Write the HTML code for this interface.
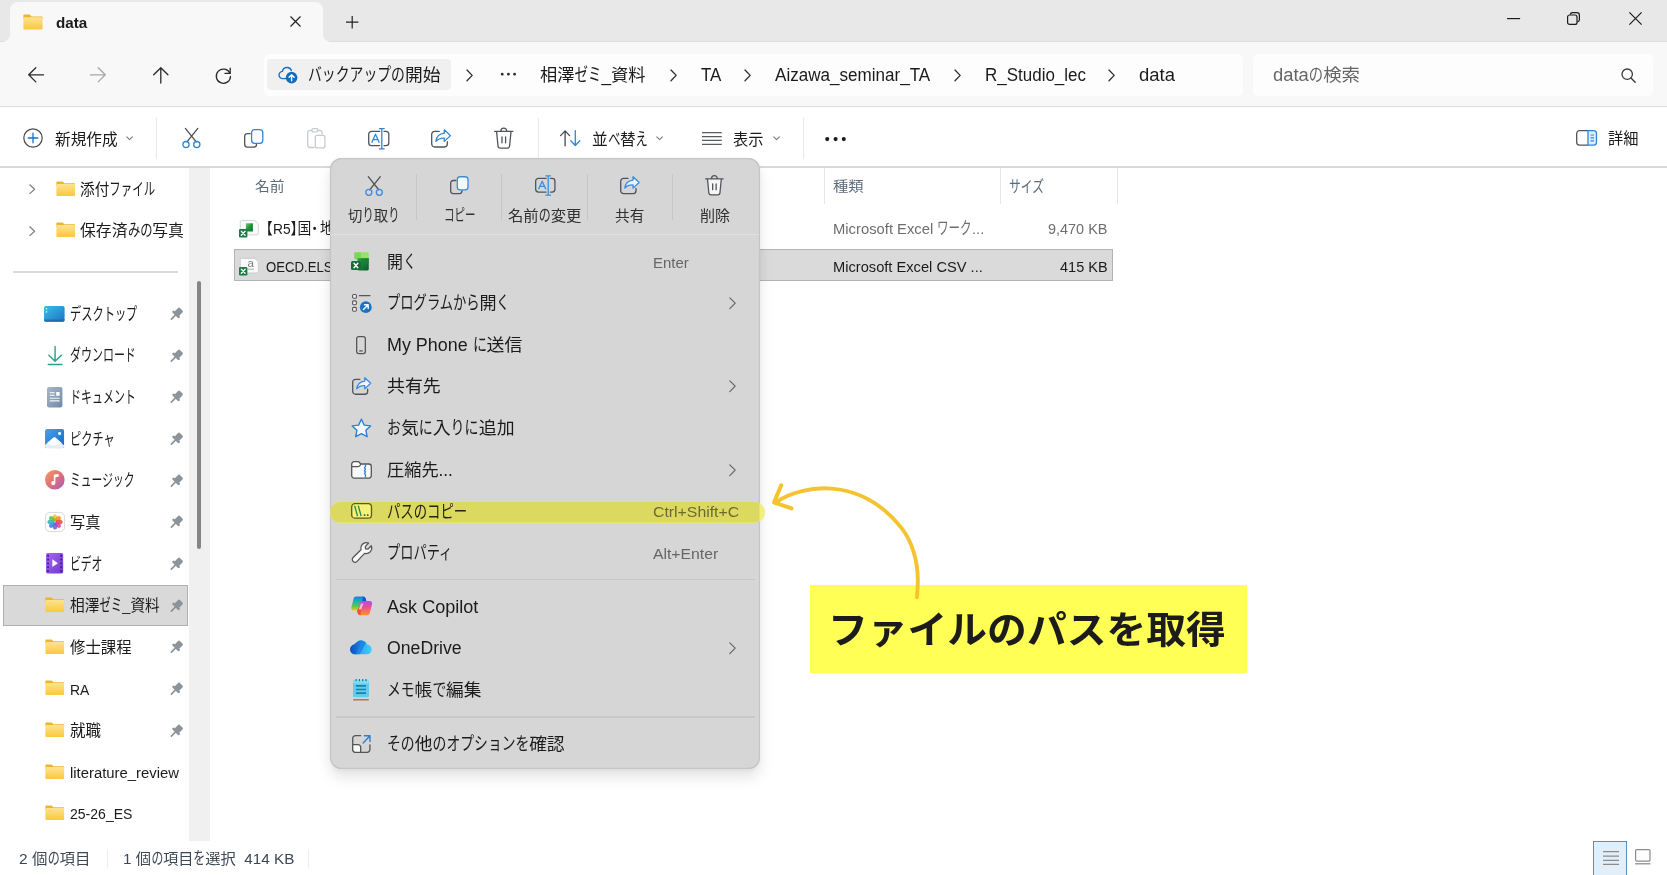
<!DOCTYPE html>
<html lang="ja">
<head>
<meta charset="utf-8">
<title>data</title>
<style>
html,body{margin:0;padding:0;}
body{width:1667px;height:875px;overflow:hidden;position:relative;background:#fff;
font-family:"Liberation Sans","Noto Sans CJK JP",sans-serif;color:#1b1b1b;}
.abs{position:absolute;}
.t{position:absolute;white-space:nowrap;line-height:1;transform-origin:0 50%;}
.k{display:inline-block;line-height:0;font-size:1.1em;transform:scaleX(.71);transform-origin:0 50%;margin-right:calc(var(--n) * -.29em);}
.k2{display:inline-block;line-height:0;font-size:1.03em;transform:scaleX(.757);transform-origin:0 50%;margin-right:calc(var(--n) * -.243em);}
.h{font-feature-settings:"halt";}
svg{position:absolute;overflow:visible;}
#titlebar{left:0;top:0;width:1667px;height:42px;background:#e8e8e8;border-bottom:1px solid #dedede;box-sizing:border-box;}
#tab{left:10px;top:2px;width:313px;height:41px;background:#f8f8f8;border-radius:8px 8px 0 0;}
#navbar{left:0;top:42px;width:1667px;height:64px;background:#f8f8f8;}
#navline{left:0;top:105.500px;width:1667px;height:1.500px;background:#dddddd;}
#addr{left:264px;top:54px;width:979px;height:42px;background:#fdfdfd;border-radius:5px;}
#chip{left:267px;top:59px;width:184px;height:31px;background:#f0f0f0;border-radius:4px;}
#search{left:1253px;top:54px;width:400px;height:42px;background:#fdfdfd;border-radius:5px;}
#toolbar{left:0;top:107px;width:1667px;height:59px;background:#fff;}
#toolline{left:0;top:166px;width:1667px;height:1.500px;background:#d9d9d9;}
.vsep{position:absolute;width:1px;background:#e8e8e8;}
#sidegap{left:188.500px;top:167.500px;width:21.500px;height:673px;background:#f0f0f0;}
#thumb{left:197px;top:281px;width:4px;height:268px;background:#858585;border-radius:2px;}
#sidesel{left:3px;top:584.500px;width:185px;height:41px;background:#d9d9d9;border:1px solid #b0b0b0;box-sizing:border-box;}
#sidediv{left:13px;top:271px;width:165px;height:1.500px;background:#dadada;}
#rowsel{left:233.500px;top:248.500px;width:879px;height:32px;background:#dadada;border:1px solid #b3b3b3;box-sizing:border-box;}
#menu{left:330px;top:157.500px;width:429.500px;height:611.500px;background:#d6d6d6;border-radius:11.500px;box-shadow:0 9px 14px rgba(0,0,0,.10),0 2px 5px rgba(0,0,0,.05),inset 0 0 0 1.200px #c5c5c5;}
.hsep{position:absolute;height:1.200px;background:#c8c8c8;}
#hlout{left:330px;top:502px;width:434.500px;height:20.500px;background:#f1ef7e;border-radius:10.250px;}
#hl{left:330px;top:502px;width:434.500px;height:20.500px;background:#dcd960;border-radius:10.250px;clip-path:inset(0 5px 0 0);}
#note{left:809.500px;top:585px;width:437px;height:88px;background:#ffff55;}
</style>
</head>
<body>
<div id="root" class="abs" style="left:0;top:0;width:1667px;height:875px;will-change:transform;">
<div id="titlebar" class="abs"></div>
<div id="tab" class="abs"></div>
<div id="navbar" class="abs"></div>
<div id="navline" class="abs"></div>
<div id="addr" class="abs"></div>
<div id="chip" class="abs"></div>
<div id="search" class="abs"></div>
<div id="toolbar" class="abs"></div>
<div id="toolline" class="abs"></div>
<!-- ===== title bar ===== -->
<svg style="left:2px;top:34px" width="8" height="8" viewBox="0 0 8 8"><path d="M8 0v8H0A8 8 0 0 0 8 0z" fill="#f8f8f8"/></svg>
<svg style="left:323px;top:34px" width="8" height="8" viewBox="0 0 8 8"><path d="M0 0v8h8A8 8 0 0 1 0 0z" fill="#f8f8f8"/></svg>
<svg width="0" height="0"><defs>
<linearGradient id="fg" x1="0" y1="0" x2="0" y2="1"><stop offset="0" stop-color="#ffe393"/><stop offset="1" stop-color="#f9c83c"/></linearGradient>
<g id="folder"><path d="M.4 1.400C.4.800.8.400 1.400.400h4.700c.5 0 .9.200 1.200.6l.9 1.200h9.900c.6 0 1 .4 1 1v1.800H.4z" fill="#eeb42a"/><rect x=".4" y="2.900" width="18.700" height="12" rx="1" fill="url(#fg)"/></g>
<path id="chv" d="M1 1l5.200 5.400L1 11.800" stroke="#2e2e2e" stroke-width="1.300" fill="none" stroke-linecap="round" stroke-linejoin="round"/>
<path id="chd" d="M.8.800l2.800 2.800L6.400.800" stroke="#7a7a7a" stroke-width="1.100" fill="none" stroke-linecap="round" stroke-linejoin="round"/>
<g id="pin"><path d="M8.200.600l4.800 4.800c.3.300.2.800-.2 1l-2.700 1.100-1.500 3.600c-.1.300-.6.400-.8.200L2.500 6c-.2-.2-.1-.7.200-.8l3.600-1.500L7.400.9c.1-.4.500-.5.800-.3z" fill="#8b9399"/><path d="M4.600 9.200L.6 13.200" stroke="#8b9399" stroke-width="1.300" stroke-linecap="round"/></g>
</defs></svg>
<svg style="left:22.500px;top:13.500px" width="20" height="16" viewBox="0 0 19.500 15.300"><use href="#folder"/></svg>
<svg style="left:289.800px;top:16px" width="11" height="11" viewBox="0 0 11 11"><path d="M.5.500l10 10M10.500.500l-10 10" stroke="#222" stroke-width="1.200" fill="none"/></svg>
<svg style="left:346.400px;top:16.200px" width="12.400" height="12.400" viewBox="0 0 12.400 12.400"><path d="M6.200 0v12.400M0 6.200h12.400" stroke="#222" stroke-width="1.200" fill="none"/></svg>
<!-- window controls -->
<svg style="left:1507px;top:17.800px" width="13.200" height="1.200" viewBox="0 0 13.200 1.200"><path d="M0 .6h13.200" stroke="#1b1b1b" stroke-width="1.200" fill="none"/></svg>
<svg style="left:1567px;top:12px" width="13" height="13" viewBox="0 0 13 13"><rect x=".6" y="3" width="9.400" height="9.400" rx="2" fill="none" stroke="#1b1b1b" stroke-width="1.200"/><path d="M3.200 2.600c.2-1.100 1.100-2 2.300-2h4.300c1.500 0 2.600 1.100 2.600 2.600v4.300c0 1.200-.9 2.100-2 2.300" fill="none" stroke="#1b1b1b" stroke-width="1.200"/></svg>
<svg style="left:1629px;top:12px" width="13" height="13" viewBox="0 0 13 13"><path d="M.4.400l12.200 12.200M12.600.400L.4 12.600" stroke="#1b1b1b" stroke-width="1.200" fill="none"/></svg>
<!-- ===== nav bar ===== -->
<svg style="left:27.500px;top:66.600px" width="16" height="15.600" viewBox="0 0 16 15.600"><path d="M15.600 7.800H1M7.800.700L.7 7.800l7.100 7.100" stroke="#2a2a2a" stroke-width="1.300" fill="none" stroke-linecap="round" stroke-linejoin="round"/></svg>
<svg style="left:90.200px;top:66.600px" width="16" height="15.600" viewBox="0 0 16 15.600"><path d="M.4 7.800H15M8.200.700l7.100 7.100-7.100 7.100" stroke="#a8a8a8" stroke-width="1.300" fill="none" stroke-linecap="round" stroke-linejoin="round"/></svg>
<svg style="left:152.800px;top:66.800px" width="15.600" height="16.400" viewBox="0 0 15.600 16.400"><path d="M7.800 16V1M.7 7.800L7.800.700l7.100 7.100" stroke="#2a2a2a" stroke-width="1.300" fill="none" stroke-linecap="round" stroke-linejoin="round"/></svg>
<svg style="left:214.600px;top:66.600px" width="17" height="17" viewBox="0 0 17 17"><path d="M14.900 6.300A7.100 7.100 0 1 0 15.500 9.400" stroke="#2a2a2a" stroke-width="1.300" fill="none" stroke-linecap="round"/><path d="M15.200 1.200v5.200H10" stroke="#2a2a2a" stroke-width="1.300" fill="none" stroke-linecap="round" stroke-linejoin="round"/></svg>
<svg style="left:277.500px;top:65.500px" width="20" height="18" viewBox="0 0 20 18"><path d="M8.600 12.600H4.900a3.600 3.600 0 0 1-.5-7.200A4.700 4.700 0 0 1 13.400 4.400" stroke="#1c6fc2" stroke-width="1.400" fill="none" stroke-linecap="round"/><circle cx="13.600" cy="11.600" r="5.800" fill="#0f6cbd"/><path d="M13.600 14.700V8.900M11.100 11.200l2.500-2.500 2.500 2.500" stroke="#fff" stroke-width="1.400" fill="none" stroke-linecap="round" stroke-linejoin="round"/></svg>
<svg style="left:466.200px;top:69.200px" width="7.200" height="12.800" viewBox="0 0 7.200 12.800"><use href="#chv"/></svg>
<svg style="left:669.500px;top:69.200px" width="7.200" height="12.800" viewBox="0 0 7.200 12.800"><use href="#chv"/></svg>
<svg style="left:744px;top:69.200px" width="7.200" height="12.800" viewBox="0 0 7.200 12.800"><use href="#chv"/></svg>
<svg style="left:953.800px;top:69.200px" width="7.200" height="12.800" viewBox="0 0 7.200 12.800"><use href="#chv"/></svg>
<svg style="left:1107.800px;top:69.200px" width="7.200" height="12.800" viewBox="0 0 7.200 12.800"><use href="#chv"/></svg>
<svg style="left:501px;top:72.800px" width="15" height="2.400" viewBox="0 0 15 2.400"><circle cx="1.200" cy="1.200" r="1.350" fill="#2a2a2a"/><circle cx="7.400" cy="1.200" r="1.350" fill="#2a2a2a"/><circle cx="13.600" cy="1.200" r="1.350" fill="#2a2a2a"/></svg>
<svg style="left:1620.600px;top:67.900px" width="15" height="15" viewBox="0 0 15 15"><circle cx="6.200" cy="6.200" r="5.200" stroke="#3a3a3a" stroke-width="1.300" fill="none"/><path d="M10 10l4.200 4.300" stroke="#3a3a3a" stroke-width="1.400" stroke-linecap="round"/></svg>
<!-- ===== toolbar ===== -->
<svg style="left:23.200px;top:128px" width="20" height="20" viewBox="0 0 20 20"><circle cx="10" cy="10" r="9.200" fill="none" stroke="#4a4a4a" stroke-width="1.200"/><path d="M10 5.200v9.600M5.200 10h9.600" stroke="#1a6fc2" stroke-width="1.300" stroke-linecap="round"/></svg>
<svg style="left:125.800px;top:136px" width="7.200" height="4.400" viewBox="0 0 7.200 4.400"><use href="#chd"/></svg>
<div class="vsep" style="left:155.700px;top:117.500px;height:41.500px"></div>
<!-- cut -->
<svg style="left:181.500px;top:128px" width="19" height="20.500" viewBox="0 0 19 20.500"><path d="M3.400.400l10.800 13.500M15.800.400L5 13.900" stroke="#4b4f55" stroke-width="1.300" stroke-linecap="round" fill="none"/><circle cx="4" cy="16.600" r="3.100" fill="none" stroke="#2f86d6" stroke-width="1.300"/><circle cx="14.800" cy="16.600" r="3.100" fill="none" stroke="#2f86d6" stroke-width="1.300"/></svg>
<!-- copy -->
<svg style="left:243.800px;top:128.600px" width="19.600" height="19" viewBox="0 0 19.600 19"><path d="M6.200 4.600H3.400A2.600 2.600 0 0 0 .7 7.200v8.400a2.600 2.600 0 0 0 2.600 2.600h6.600a2.600 2.600 0 0 0 2.600-2.600v-.6" fill="none" stroke="#50545a" stroke-width="1.300" stroke-linecap="round"/><rect x="7.600" y=".7" width="11.200" height="13.600" rx="3" fill="none" stroke="#2f86d6" stroke-width="1.300"/></svg>
<!-- paste (disabled) -->
<svg style="left:306.800px;top:128px" width="18.600" height="20.600" viewBox="0 0 18.600 20.600"><path d="M7 19.500H3A2.300 2.300 0 0 1 .7 17.200V4.600A2.300 2.300 0 0 1 3 2.300h1.800M11 2.300h1.800a2.300 2.300 0 0 1 2.300 2.300v1.600" fill="none" stroke="#c8ccd1" stroke-width="1.300" stroke-linecap="round"/><rect x="4.800" y=".7" width="6.200" height="3.200" rx="1.600" fill="none" stroke="#c8ccd1" stroke-width="1.300"/><rect x="8.300" y="7.400" width="9.600" height="12.500" rx="2" fill="none" stroke="#c8ccd1" stroke-width="1.300"/></svg>
<!-- rename -->
<svg style="left:368px;top:127.500px" width="21.500" height="21.500" viewBox="0 0 21.500 21.500"><path d="M11.600 3.400H3.600A2.900 2.900 0 0 0 .7 6.300v8.400a2.900 2.900 0 0 0 2.900 2.900h8M16 3.400h1.900a2.900 2.900 0 0 1 2.900 2.900v8.400a2.900 2.900 0 0 1-2.900 2.900H16" fill="none" stroke="#50545a" stroke-width="1.300" stroke-linecap="round"/><path d="M3.900 14.200L7.500 6.200l3.600 8M5.100 11.600h4.800" fill="none" stroke="#2f86d6" stroke-width="1.300" stroke-linecap="round" stroke-linejoin="round"/><path d="M13.800.700V20.800M11.400.700h4.800M11.400 20.800h4.800" fill="none" stroke="#2f86d6" stroke-width="1.300" stroke-linecap="round"/></svg>
<!-- share -->
<svg id="ishare" style="left:431.400px;top:129px" width="20.400" height="19" viewBox="0 0 20.400 19"><path d="M8.200 2.400H3.600A2.900 2.900 0 0 0 .7 5.300v9.800A2.900 2.900 0 0 0 3.600 18h9.800a2.900 2.900 0 0 0 2.900-2.900v-2.400" fill="none" stroke="#50545a" stroke-width="1.300" stroke-linecap="round"/><path d="M13.300.8l6.200 5.800-6.200 5.800V9.100c-3.700-.2-6.300.9-8.400 3.300.5-4.300 3.300-7.600 8.400-8.200z" fill="#fdfdfd" stroke="#2f86d6" stroke-width="1.300" stroke-linejoin="round"/></svg>
<!-- delete -->
<svg id="itrash" style="left:493.800px;top:127.600px" width="19.600" height="20.800" viewBox="0 0 19.600 20.800"><path d="M.7 3.400h18.200M6.800 3.200a3 3 0 0 1 6 0M2.600 3.600l1.400 14.400a2.300 2.300 0 0 0 2.300 2.100h7a2.300 2.300 0 0 0 2.300-2.100L17 3.600M8 8.800v6M11.600 8.800v6" fill="none" stroke="#50545a" stroke-width="1.300" stroke-linecap="round" stroke-linejoin="round"/></svg>
<div class="vsep" style="left:537.700px;top:117.500px;height:41.500px"></div>
<!-- sort -->
<svg style="left:560px;top:129.800px" width="21" height="16.400" viewBox="0 0 21 16.400"><path d="M5.100 15.800V.9M.6 5.600L5.100.9l4.500 4.700" fill="none" stroke="#44484d" stroke-width="1.300" stroke-linecap="round" stroke-linejoin="round"/><path d="M15.300.6v14.900M10.800 10.800l4.500 4.700 4.500-4.700" fill="none" stroke="#2f86d6" stroke-width="1.300" stroke-linecap="round" stroke-linejoin="round"/></svg>
<svg style="left:656.200px;top:136px" width="7.200" height="4.400" viewBox="0 0 7.200 4.400"><use href="#chd"/></svg>
<!-- view -->
<svg style="left:702px;top:131.600px" width="19.800" height="13.200" viewBox="0 0 19.800 13.200"><path d="M0 .7h19.800M0 4.600h19.800M0 8.400h19.800M0 12.400h19.800" stroke="#5a5e63" stroke-width="1.300"/></svg>
<svg style="left:773px;top:136px" width="7.200" height="4.400" viewBox="0 0 7.200 4.400"><use href="#chd"/></svg>
<div class="vsep" style="left:802.700px;top:117.500px;height:41.500px"></div>
<svg style="left:824.800px;top:136.800px" width="21" height="4.200" viewBox="0 0 21 4.200"><circle cx="2.200" cy="2.100" r="2.050" fill="#1c1c1c"/><circle cx="10.600" cy="2.100" r="2.050" fill="#1c1c1c"/><circle cx="18.800" cy="2.100" r="2.050" fill="#1c1c1c"/></svg>
<!-- details pane -->
<svg style="left:1575.600px;top:130.400px" width="21.200" height="15.800" viewBox="0 0 21.200 15.800"><path d="M12 .7H3.600A2.900 2.900 0 0 0 .7 3.600v8.600a2.900 2.900 0 0 0 2.900 2.900H12" fill="none" stroke="#50545a" stroke-width="1.300"/><path d="M12 .7h5.600a2.900 2.900 0 0 1 2.900 2.900v8.600a2.900 2.900 0 0 1-2.900 2.900H12z" fill="#dbeeff" stroke="#2f86d6" stroke-width="1.300"/><path d="M14.600 5h3.400M14.600 7.900h3.400M14.600 10.800h3.400" stroke="#2f86d6" stroke-width="1.200"/></svg>
<!-- ===== sidebar ===== -->
<div id="sidegap" class="abs"></div>
<div id="thumb" class="abs"></div>
<div id="sidediv" class="abs"></div>
<div id="sidesel" class="abs"></div>
<svg width="0" height="0"><defs>
<path id="chs" d="M.8.800l4.800 4.400L.8 9.600" stroke="#7d7d7d" stroke-width="1.200" fill="none" stroke-linecap="round" stroke-linejoin="round"/>
<g id="pin2"><g transform="translate(11.200,2.300) rotate(45) scale(1.120)"><rect x="-2.800" y="0" width="5.600" height="5.800" rx="1.200" fill="#8b949b"/><rect x="-4.300" y="5.200" width="8.600" height="2.400" rx="1.100" fill="#8b949b"/><path d="M0 7.400V12.400" stroke="#8b949b" stroke-width="1.500" stroke-linecap="round"/></g></g>
<linearGradient id="gdesk" x1="0" y1="0" x2="1" y2="1"><stop offset="0" stop-color="#3dbfe0"/><stop offset="1" stop-color="#1c72c6"/></linearGradient>
<linearGradient id="gdl" x1="0" y1="0" x2="0" y2="1"><stop offset="0" stop-color="#35b079"/><stop offset="1" stop-color="#2a9d94"/></linearGradient>
<linearGradient id="gdoc" x1="0" y1="0" x2="1" y2="1"><stop offset="0" stop-color="#a7b8cd"/><stop offset="1" stop-color="#7088a6"/></linearGradient>
<linearGradient id="gpic" x1="0" y1="0" x2="1" y2="1"><stop offset="0" stop-color="#45a3ee"/><stop offset="1" stop-color="#1766c2"/></linearGradient>
<linearGradient id="gmus" x1="0" y1="0" x2="1" y2="1"><stop offset="0" stop-color="#f5a05a"/><stop offset=".5" stop-color="#e0707a"/><stop offset="1" stop-color="#a458c0"/></linearGradient>
<linearGradient id="gvid" x1="0" y1="0" x2="1" y2="1"><stop offset="0" stop-color="#a868f0"/><stop offset="1" stop-color="#7236d0"/></linearGradient>
</defs></svg>
<svg style="left:29.400px;top:184.2px" width="6.400" height="10.400" viewBox="0 0 6.400 10.400"><use href="#chs"/></svg>
<svg style="left:55.500px;top:180.7px" width="19.500" height="15.300" viewBox="0 0 19.500 15.300"><use href="#folder"/></svg>
<svg style="left:29.400px;top:225.9px" width="6.400" height="10.400" viewBox="0 0 6.400 10.400"><use href="#chs"/></svg>
<svg style="left:55.500px;top:222.3px" width="19.500" height="15.300" viewBox="0 0 19.500 15.300"><use href="#folder"/></svg>
<svg style="left:44.700px;top:597.0px" width="19.500" height="15.300" viewBox="0 0 19.500 15.300"><use href="#folder"/></svg>
<svg style="left:44.700px;top:638.6px" width="19.500" height="15.300" viewBox="0 0 19.500 15.300"><use href="#folder"/></svg>
<svg style="left:44.700px;top:680.2px" width="19.500" height="15.300" viewBox="0 0 19.500 15.300"><use href="#folder"/></svg>
<svg style="left:44.700px;top:721.9px" width="19.500" height="15.300" viewBox="0 0 19.500 15.300"><use href="#folder"/></svg>
<svg style="left:44.700px;top:763.6px" width="19.500" height="15.300" viewBox="0 0 19.500 15.300"><use href="#folder"/></svg>
<svg style="left:44.700px;top:805.2px" width="19.500" height="15.300" viewBox="0 0 19.500 15.300"><use href="#folder"/></svg>
<svg style="left:170px;top:307.1px" width="14" height="14" viewBox="0 0 14 14"><use href="#pin2"/></svg>
<svg style="left:170px;top:348.7px" width="14" height="14" viewBox="0 0 14 14"><use href="#pin2"/></svg>
<svg style="left:170px;top:390.4px" width="14" height="14" viewBox="0 0 14 14"><use href="#pin2"/></svg>
<svg style="left:170px;top:432.0px" width="14" height="14" viewBox="0 0 14 14"><use href="#pin2"/></svg>
<svg style="left:170px;top:473.7px" width="14" height="14" viewBox="0 0 14 14"><use href="#pin2"/></svg>
<svg style="left:170px;top:515.3px" width="14" height="14" viewBox="0 0 14 14"><use href="#pin2"/></svg>
<svg style="left:170px;top:556.9px" width="14" height="14" viewBox="0 0 14 14"><use href="#pin2"/></svg>
<svg style="left:170px;top:598.6px" width="14" height="14" viewBox="0 0 14 14"><use href="#pin2"/></svg>
<svg style="left:170px;top:640.2px" width="14" height="14" viewBox="0 0 14 14"><use href="#pin2"/></svg>
<svg style="left:170px;top:681.9px" width="14" height="14" viewBox="0 0 14 14"><use href="#pin2"/></svg>
<svg style="left:170px;top:723.5px" width="14" height="14" viewBox="0 0 14 14"><use href="#pin2"/></svg>
<svg style="left:44.400px;top:305.8px" width="20.600" height="15.800" viewBox="0 0 20.600 15.800"><rect width="20.600" height="15.800" rx="1.800" fill="url(#gdesk)"/><path d="M0 13.600h20.600V14a1.800 1.800 0 0 1-1.800 1.800H1.800A1.800 1.800 0 0 1 0 14z" fill="#1a64b0" opacity=".75"/><rect x="1.800" y="2.100" width="1.400" height="1.400" fill="#d8f4fb"/><rect x="1.800" y="5.200" width="1.400" height="1.400" fill="#d8f4fb"/></svg>
<svg style="left:47.800px;top:345.9px" width="14.200" height="19.400" viewBox="0 0 14.200 19.400"><path d="M7.100.500v14.400M.9 9.300l6.200 6 6.200-6M.3 18.600h13.600" fill="none" stroke="url(#gdl)" stroke-width="1.500" stroke-linecap="round" stroke-linejoin="round"/></svg>
<svg style="left:47.200px;top:386.7px" width="15.400" height="20.400" viewBox="0 0 15.400 20.400"><rect width="15.400" height="20.400" rx="1.800" fill="url(#gdoc)"/><path d="M2.800 5.700h5M2.800 8.300h5" stroke="#fff" stroke-width="1.100"/><rect x="9.200" y="5" width="3.400" height="3.800" fill="#fff"/><path d="M2.800 11.200h9.800M2.800 13.900h9.800" stroke="#fff" stroke-width="1.100" opacity=".9"/></svg>
<svg style="left:45px;top:428.9px" width="19.200" height="19.200" viewBox="0 0 19.200 19.200"><clipPath id="cpic"><rect width="19.200" height="19.200" rx="2.200"/></clipPath><g clip-path="url(#cpic)"><rect width="19.200" height="19.200" fill="url(#gpic)"/><path d="M-1 16.800L8.300 8.800a1.700 1.700 0 0 1 2.300 0L20.500 17.600V20H-1z" fill="#e4eefb"/><path d="M2.200 14L8.300 8.800a1.700 1.700 0 0 1 2.300 0l6 5.300c-2.400 1.700-5 2.400-7.200 2.400s-5-.8-7.200-2.500z" fill="#fff"/><circle cx="14.600" cy="4.600" r="1.500" fill="#fff"/></g></svg>
<svg style="left:44.700px;top:469.8px" width="19.600" height="19.600" viewBox="0 0 19.600 19.600"><circle cx="9.800" cy="9.800" r="9.800" fill="url(#gmus)"/><path d="M8.800 13V5.300c0-.4.300-.7.700-.8l3.400-.6c.5-.1.900.2.900.7v1.300c0 .4-.3.700-.7.800l-2.700.5V13a2.100 2.100 0 1 1-1.600-2z" fill="#fff"/></svg>
<svg style="left:44.600px;top:511.8px" width="20" height="20" viewBox="0 0 20 20"><rect x=".4" y=".4" width="19.200" height="19.200" rx="4.600" fill="#fdfdfd" stroke="#cfcfcf" stroke-width=".8"/><ellipse cx="10" cy="5.900" rx="2.300" ry="3.500" fill="#f6c026" opacity=".88" transform="rotate(0 10 10)"/><ellipse cx="10" cy="5.900" rx="2.300" ry="3.500" fill="#f18c2a" opacity=".88" transform="rotate(45 10 10)"/><ellipse cx="10" cy="5.900" rx="2.300" ry="3.500" fill="#e8503a" opacity=".88" transform="rotate(90 10 10)"/><ellipse cx="10" cy="5.900" rx="2.300" ry="3.500" fill="#d946a0" opacity=".88" transform="rotate(135 10 10)"/><ellipse cx="10" cy="5.900" rx="2.300" ry="3.500" fill="#8e4fd0" opacity=".88" transform="rotate(180 10 10)"/><ellipse cx="10" cy="5.900" rx="2.300" ry="3.500" fill="#3f7fe0" opacity=".88" transform="rotate(225 10 10)"/><ellipse cx="10" cy="5.900" rx="2.300" ry="3.500" fill="#2fb0d8" opacity=".88" transform="rotate(270 10 10)"/><ellipse cx="10" cy="5.900" rx="2.300" ry="3.500" fill="#5cc04a" opacity=".88" transform="rotate(315 10 10)"/></svg>
<svg style="left:46px;top:553.0px" width="17.200" height="20.400" viewBox="0 0 17.200 20.400"><rect width="17.200" height="20.400" rx="1.600" fill="url(#gvid)"/><rect x="1.100" y="1.8" width="1.900" height="1.900" rx=".3" fill="#46208e"/><rect x="14.200" y="1.8" width="1.900" height="1.900" rx=".3" fill="#46208e"/><rect x="1.100" y="5.6" width="1.900" height="1.900" rx=".3" fill="#46208e"/><rect x="14.200" y="5.6" width="1.900" height="1.900" rx=".3" fill="#46208e"/><rect x="1.100" y="9.4" width="1.900" height="1.900" rx=".3" fill="#46208e"/><rect x="14.200" y="9.4" width="1.900" height="1.900" rx=".3" fill="#46208e"/><rect x="1.100" y="13.2" width="1.900" height="1.900" rx=".3" fill="#46208e"/><rect x="14.200" y="13.2" width="1.900" height="1.900" rx=".3" fill="#46208e"/><rect x="1.100" y="17.0" width="1.900" height="1.900" rx=".3" fill="#46208e"/><rect x="14.200" y="17.0" width="1.900" height="1.900" rx=".3" fill="#46208e"/><path d="M6.300 6.300l5.600 3.900-5.600 3.900z" fill="#fff"/></svg>
<div class="vsep" style="left:106.800px;top:849px;height:19px;background:#eeeeee"></div>
<div class="vsep" style="left:308.400px;top:849px;height:19px;background:#eeeeee"></div>
<div class="abs" style="left:1593px;top:840.800px;width:33.800px;height:37px;background:#e2eff9;border:1px solid #5d8fbd;box-sizing:border-box"></div>
<svg style="left:1602.500px;top:851.300px" width="16" height="14" viewBox="0 0 16 14"><path d="M0 .7h16M0 5.200h16M0 9.300h16M0 13.300h16" stroke="#8c8c8c" stroke-width="1.300"/></svg>
<svg style="left:1635px;top:849px" width="15.600" height="15.600" viewBox="0 0 15.600 15.600"><rect x=".6" y=".6" width="14.400" height="11.600" rx="1" fill="#fff" stroke="#8c8c8c" stroke-width="1.200"/><path d="M.2 14.800h15.200" stroke="#8c8c8c" stroke-width="1.300"/></svg>
<!-- ===== file list ===== -->
<div class="vsep" style="left:824px;top:167.500px;height:36.500px;background:#e6e6e6"></div>
<div class="vsep" style="left:1000.200px;top:167.500px;height:36.500px;background:#e6e6e6"></div>
<div class="vsep" style="left:1116.600px;top:167.500px;height:36.500px;background:#e6e6e6"></div>
<div id="rowsel" class="abs"></div>
<svg width="0" height="0"><defs>
<linearGradient id="gxl" x1="0" y1="0" x2="1" y2="1"><stop offset="0" stop-color="#6fd05a"/><stop offset=".55" stop-color="#1e8a38"/><stop offset="1" stop-color="#16702c"/></linearGradient>
<g id="sheet"><path d="M1.600.400h13.200l3.600 3.400v9.800a1.300 1.300 0 0 1-1.300 1.300H1.600A1.300 1.300 0 0 1 .3 13.600V1.700A1.300 1.300 0 0 1 1.600.400z" fill="#fafafa" stroke="#c4c4c4" stroke-width=".7"/></g>
<g id="xbadge"><rect width="8.400" height="8.600" rx="1.300" fill="#1f7b45"/><path d="M2.300 2.300l3.800 4M6.100 2.300l-3.800 4" stroke="#fff" stroke-width="1.300" stroke-linecap="round"/></g>
</defs></svg>
<svg style="left:240.100px;top:220px" width="18.800" height="15.300" viewBox="0 0 18.800 15.300"><use href="#sheet"/><rect x="5.900" y="3.300" width="7" height="8.200" fill="url(#gxl)"/></svg>
<svg style="left:238.900px;top:229.200px" width="8.400" height="8.600" viewBox="0 0 8.400 8.600"><use href="#xbadge"/></svg>
<svg style="left:240.100px;top:257.600px" width="18.800" height="15.300" viewBox="0 0 18.800 15.300"><use href="#sheet"/><path d="M7.700 11.200h6.400" stroke="#8a8a8a" stroke-width=".7"/></svg>
<span class="abs" style="left:247.600px;top:257.800px;font-size:11.500px;line-height:1;color:#7a7a7a">a</span>
<svg style="left:238.900px;top:266.800px" width="8.400" height="8.600" viewBox="0 0 8.400 8.600"><use href="#xbadge"/></svg>

<!-- file list text -->
<span class="t" id="t32" style="left:265.5px;top:221.4px;font-size:15.5px;transform:scaleX(0.8903);"><span class="h">【</span>R5<span class="h">】</span>国<span class="h" style="letter-spacing:2px">・</span>地</span>
<span class="t" id="t33" style="left:265.5px;top:258.9px;font-size:15.5px;transform:scaleX(0.8483);">OECD.ELS</span>
<!-- ===== context menu ===== -->
<div id="menu" class="abs"></div>
<div id="hlout" class="abs"></div>
<div id="hl" class="abs"></div>
<div class="hsep" style="left:330px;top:234.200px;width:429px;background:#e0e0e0"></div>
<div class="hsep" style="left:335.500px;top:579.300px;width:419px"></div>
<div class="hsep" style="left:335.500px;top:716.400px;width:419px"></div>
<div class="vsep" style="left:415.900px;top:174px;height:46px;background:#c6c6c6"></div>
<div class="vsep" style="left:501.200px;top:174px;height:46px;background:#c6c6c6"></div>
<div class="vsep" style="left:586.600px;top:174px;height:46px;background:#c6c6c6"></div>
<div class="vsep" style="left:671.700px;top:174px;height:46px;background:#c6c6c6"></div>
<!-- top row icons -->
<svg style="left:365px;top:175.600px" width="18.400" height="20.400" viewBox="0 0 19 20.500"><path d="M3.400.400l10.800 13.500M15.800.400L5 13.900" stroke="#50545a" stroke-width="1.350" stroke-linecap="round" fill="none"/><circle cx="4" cy="16.600" r="3.100" fill="none" stroke="#3a8cdc" stroke-width="1.350"/><circle cx="14.800" cy="16.600" r="3.100" fill="none" stroke="#3a8cdc" stroke-width="1.350"/></svg>
<svg style="left:449.800px;top:176.400px" width="18.800" height="18.400" viewBox="0 0 19.600 19"><path d="M6.200 4.600H3.400A2.600 2.600 0 0 0 .7 7.200v8.400a2.600 2.600 0 0 0 2.600 2.600h6.600a2.600 2.600 0 0 0 2.600-2.600v-.6" fill="none" stroke="#50545a" stroke-width="1.350" stroke-linecap="round"/><rect x="7.600" y=".7" width="11.200" height="13.600" rx="3" fill="#f4f8fc" stroke="#3a8cdc" stroke-width="1.350"/></svg>
<svg style="left:534.600px;top:175.200px" width="20.600" height="21" viewBox="0 0 21.500 21.500"><path d="M11.600 3.400H3.600A2.900 2.900 0 0 0 .7 6.300v8.400a2.900 2.900 0 0 0 2.900 2.900h8M16 3.400h1.900a2.900 2.900 0 0 1 2.900 2.900v8.400a2.900 2.900 0 0 1-2.900 2.900H16" fill="none" stroke="#50545a" stroke-width="1.350" stroke-linecap="round"/><path d="M3.900 14.200L7.500 6.200l3.600 8M5.100 11.600h4.800" fill="none" stroke="#3a8cdc" stroke-width="1.350" stroke-linecap="round" stroke-linejoin="round"/><path d="M13.800.700V20.800M11.400.700h4.800M11.400 20.800h4.800" fill="none" stroke="#3a8cdc" stroke-width="1.350" stroke-linecap="round"/></svg>
<svg style="left:619.800px;top:176.400px" width="20" height="18.600" viewBox="0 0 20.400 19"><path d="M8.200 2.400H3.600A2.900 2.900 0 0 0 .7 5.300v9.800A2.900 2.900 0 0 0 3.600 18h9.800a2.900 2.900 0 0 0 2.900-2.900v-2.400" fill="none" stroke="#50545a" stroke-width="1.350" stroke-linecap="round"/><path d="M13.300.8l6.200 5.800-6.200 5.800V9.100c-3.700-.2-6.300.9-8.400 3.300.5-4.300 3.300-7.600 8.400-8.200z" fill="#eef5fc" stroke="#3a8cdc" stroke-width="1.350" stroke-linejoin="round"/></svg>
<svg style="left:705.200px;top:175.300px" width="18.800" height="21" viewBox="0 0 19.600 20.800"><path d="M2.600 3.600l1.400 14.400a2.300 2.300 0 0 0 2.300 2.100h7a2.300 2.300 0 0 0 2.300-2.100L17 3.600z" fill="#f6f6f6" stroke="none"/><path d="M.7 3.400h18.200M6.800 3.200a3 3 0 0 1 6 0M2.600 3.600l1.400 14.400a2.300 2.300 0 0 0 2.300 2.100h7a2.300 2.300 0 0 0 2.300-2.100L17 3.600M8 8.800v6M11.600 8.800v6" fill="none" stroke="#50545a" stroke-width="1.350" stroke-linecap="round" stroke-linejoin="round"/></svg>
<svg width="0" height="0"><defs>
<path id="chm" d="M.8.800l5.400 5.400L.8 11.600" stroke="#666" stroke-width="1.200" fill="none" stroke-linecap="round" stroke-linejoin="round"/>
<linearGradient id="gx1" x1="0" y1="0" x2="1" y2="1"><stop offset="0" stop-color="#2aa04a"/><stop offset="1" stop-color="#0c5a28"/></linearGradient>
<linearGradient id="gcp1" x1="0" y1="0" x2="0" y2="1"><stop offset="0" stop-color="#1a7fe0"/><stop offset=".35" stop-color="#1fb0b8"/><stop offset=".7" stop-color="#5cc84a"/><stop offset="1" stop-color="#f2c81e"/></linearGradient>
<linearGradient id="gcp2" x1="0" y1="0" x2="0" y2="1"><stop offset="0" stop-color="#b44ce8"/><stop offset=".45" stop-color="#f0508c"/><stop offset="1" stop-color="#ff9030"/></linearGradient>
<linearGradient id="god1" x1="0" y1="0" x2="1" y2="0"><stop offset="0" stop-color="#0c4fb8"/><stop offset="1" stop-color="#1f8ae8"/></linearGradient>
<linearGradient id="god2" x1="0" y1="0" x2="1" y2="0"><stop offset="0" stop-color="#1f8ae8"/><stop offset="1" stop-color="#3fd0fa"/></linearGradient>
</defs></svg>
<!-- submenu chevrons -->
<svg style="left:728.600px;top:296.900px" width="7" height="12.400" viewBox="0 0 7 12.400"><use href="#chm"/></svg>
<svg style="left:728.600px;top:380.400px" width="7" height="12.400" viewBox="0 0 7 12.400"><use href="#chm"/></svg>
<svg style="left:728.600px;top:463.700px" width="7" height="12.400" viewBox="0 0 7 12.400"><use href="#chm"/></svg>
<svg style="left:728.600px;top:642.300px" width="7" height="12.400" viewBox="0 0 7 12.400"><use href="#chm"/></svg>
<!-- item icons -->
<!-- excel -->
<svg style="left:350.600px;top:251.800px" width="18.400" height="18.800" viewBox="0 0 18.400 18.800"><rect x="3.200" y=".2" width="7.400" height="7" rx="1" fill="#7ad858"/><rect x="10.200" y=".2" width="7.600" height="7" rx="1" fill="#94e468"/><path d="M6.400 6.200h11.400v10.800a1.400 1.400 0 0 1-1.400 1.400H7.800a1.400 1.400 0 0 1-1.400-1.400z" fill="url(#gx1)"/><rect x="10.200" y="6.200" width="7.600" height="6" fill="#188038" opacity=".55"/><rect x="0" y="9" width="9.800" height="9" rx="1.600" fill="#176b3a"/><path d="M3 11.300l3.800 4.500M6.800 11.300L3 15.800" stroke="#fff" stroke-width="1.350" stroke-linecap="round"/></svg>
<!-- open with -->
<svg style="left:352px;top:294.400px" width="20" height="19.200" viewBox="0 0 20 19.200"><rect x=".6" y=".5" width="3.800" height="3.800" rx="1.100" fill="#f4f4f4" stroke="#555" stroke-width="1.100"/><rect x=".6" y="6.900" width="3.800" height="3.800" rx="1.100" fill="#f4f4f4" stroke="#555" stroke-width="1.100"/><rect x=".6" y="13.400" width="3.800" height="3.800" rx="1.100" fill="#f4f4f4" stroke="#555" stroke-width="1.100"/><path d="M7.400 1.700h10.600" stroke="#555" stroke-width="1.200" stroke-linecap="round"/><circle cx="13.800" cy="13.200" r="5.900" fill="#1a73c8"/><path d="M11.400 15.600l4.600-4.600M12.600 10.800h3.600v3.600" fill="none" stroke="#fff" stroke-width="1.350" stroke-linecap="round" stroke-linejoin="round"/></svg>
<!-- phone -->
<svg style="left:356.200px;top:335.600px" width="10" height="18.200" viewBox="0 0 10 18.200"><rect x=".65" y=".65" width="8.700" height="16.900" rx="2.100" fill="none" stroke="#555" stroke-width="1.300"/><path d="M3.700 14.900h2.600" stroke="#555" stroke-width="1.200" stroke-linecap="round"/></svg>
<!-- share -->
<svg style="left:351.900px;top:377.300px" width="19.600" height="18.200" viewBox="0 0 20.400 19"><path d="M8.200 2.400H3.600A2.900 2.900 0 0 0 .7 5.300v9.800A2.900 2.900 0 0 0 3.600 18h9.800a2.900 2.900 0 0 0 2.900-2.900v-2.400" fill="none" stroke="#50545a" stroke-width="1.350" stroke-linecap="round"/><path d="M13.300.8l6.200 5.800-6.200 5.800V9.100c-3.700-.2-6.300.9-8.400 3.300.5-4.300 3.300-7.600 8.400-8.200z" fill="#eef5fc" stroke="#3a8cdc" stroke-width="1.350" stroke-linejoin="round"/></svg>
<!-- star -->
<svg style="left:350.800px;top:417.800px" width="20.800" height="20" viewBox="0 0 20.800 20"><path d="M10.400 1.200l2.800 5.900 6.400.8-4.700 4.400 1.200 6.400-5.700-3.100-5.700 3.100 1.200-6.400L1.200 7.900l6.400-.8z" fill="#f2f8fe" stroke="#2f80d2" stroke-width="1.400" stroke-linejoin="round"/></svg>
<!-- zip folder -->
<svg style="left:350.800px;top:461px" width="21" height="17.800" viewBox="0 0 21 17.800"><path d="M.7 3.200A2.500 2.500 0 0 1 3.200.7h3.600c.7 0 1.300.3 1.700.8l1.200 1.500h8.100a2.500 2.500 0 0 1 2.500 2.500v9.100a2.500 2.500 0 0 1-2.500 2.500H3.200A2.500 2.500 0 0 1 .7 14.600z" fill="#fafafa" stroke="#555" stroke-width="1.300" stroke-linejoin="round"/><path d="M.9 5.600h6.300c.7 0 1.300-.3 1.700-.9l.9-1.500" fill="none" stroke="#555" stroke-width="1.200"/><path d="M14.500 3.200v2.200l-1 1.400 1 1.400-1 1.400 1 1.400-1 1.400 1 1.400v2.800" fill="none" stroke="#2f80d2" stroke-width="1.300" stroke-linejoin="round"/></svg>
<!-- copy path -->
<svg style="left:350.800px;top:503.300px" width="21.200" height="15.800" viewBox="0 0 21.200 15.800"><rect x=".7" y=".7" width="19.800" height="14.400" rx="3.200" fill="#f3f37c" stroke="#5f5b16" stroke-width="1.300"/><path d="M3.800 3.200l2.600 9.400M7.400 3.200l2.600 9.400" stroke="#2c8a48" stroke-width="1.350" stroke-linecap="round"/><circle cx="13.600" cy="12.100" r=".95" fill="#4a4a18"/><circle cx="16.800" cy="12.100" r=".95" fill="#4a4a18"/></svg>
<!-- wrench -->
<svg style="left:350.800px;top:542.200px" width="21.200" height="20.800" viewBox="0 0 21.200 20.800"><path d="M13.800.9c1.300-.4 2.700-.3 3.800.2l-3.300 3.300.3 2.400 2.400.3 3.300-3.300c.5 1.200.6 2.500.2 3.800-.9 2.900-4 4.500-6.900 3.800L6 19.400c-1 1-2.700 1.100-3.800.1-1.200-1.100-1.200-2.900-.1-4l7.900-7.800c-.7-2.900.9-5.900 3.800-6.800z" fill="#fafafa" stroke="#555" stroke-width="1.300" stroke-linejoin="round"/></svg>
<!-- copilot -->
<svg style="left:350.500px;top:596.200px" width="21.400" height="19.600" viewBox="0 0 21.400 19.600"><path d="M5.200.4h6.600c1.300 0 2.400.8 2.800 2l.6 2-3 8.200c-.4 1.200-1.500 2-2.800 2H2.600C1 14.600-.1 13.100.3 11.600L2.700 2.200C3 1.100 4 .4 5.200.4z" fill="url(#gcp1)"/><path d="M11.800.4c1.300 0 2.400.8 2.800 2l.6 2-1 2.700h-3z" fill="#1556c2"/><path d="M16.200 19.200H9.600c-1.300 0-2.400-.8-2.800-2l-.6-2 3-8.200c.4-1.200 1.500-2 2.800-2h6.800c1.600 0 2.700 1.500 2.300 3l-2.400 9.400c-.3 1.100-1.300 1.800-2.500 1.800z" fill="url(#gcp2)"/><path d="M9.600 19.200c-1.300 0-2.400-.8-2.800-2l-.6-2 1-2.700h3z" fill="#ea5528"/><path d="M10 7.400h2.400l-2.200 6.200H7.800z" fill="#fff" opacity=".6"/></svg>
<!-- onedrive -->
<svg style="left:350.400px;top:640.400px" width="21.800" height="14.800" viewBox="0 0 21.800 14.800"><path d="M6.600 2.400C8 .9 10 .2 12 .4c2.400.3 4.400 1.900 5.200 4.100 2.500.2 4.500 2.300 4.500 4.900 0 2.700-2.200 4.900-4.900 4.900H5.200C2.400 14.300.2 12.100.2 9.400c0-2.400 1.700-4.400 3.900-4.800.5-.9 1.400-1.700 2.500-2.200z" fill="url(#god2)"/><path d="M6.600 2.400c1.600-1.600 4-2.200 6.200-1.600L6.400 14.300H5.200C2.400 14.300.2 12.100.2 9.400c0-2.400 1.700-4.400 3.900-4.800.5-.9 1.400-1.700 2.500-2.200z" fill="url(#god1)"/><path d="M12.800.8c1.200.4 2.300 1.100 3.100 2.100L9.600 14.300H6.400z" fill="#1f7fe0" opacity=".85"/></svg>
<!-- notepad -->
<svg style="left:352.900px;top:678.600px" width="16" height="21.600" viewBox="0 0 16 21.600"><rect x="0" y=".9" width="16" height="17.300" rx="1.400" fill="#62cbe8"/><rect x="0" y=".9" width="16" height="3.600" rx="1.400" fill="#8adcf2"/><path d="M3.100 0v2.200M6.400 0v2.200M9.700 0v2.200M13 0v2.200" stroke="#147aa8" stroke-width="1.200"/><path d="M3 6.900h10M3 10.500h10M3 14.100h10" stroke="#1682b4" stroke-width="1.700"/><path d="M.2 20.800h15.600" stroke="#b8652c" stroke-width="1.300"/></svg>
<!-- more options -->
<svg style="left:352px;top:734.600px" width="18.800" height="18" viewBox="0 0 18.800 18"><path d="M8.600.7H3.500A2.800 2.800 0 0 0 .7 3.500v11A2.800 2.800 0 0 0 3.500 17.300h11.600a2.800 2.800 0 0 0 2.800-2.800V9.800" fill="none" stroke="#555" stroke-width="1.300" stroke-linecap="round"/><path d="M.7 9.600h5.400a2.600 2.600 0 0 1 2.600 2.600v5.100H3.500A2.800 2.800 0 0 1 .7 14.500z" fill="#fafafa" stroke="#555" stroke-width="1.300" stroke-linejoin="round"/><path d="M11.200 7.900l6.600-6.900M12.400.8h5.600v5.600" fill="none" stroke="#2f80d2" stroke-width="1.400" stroke-linecap="round" stroke-linejoin="round"/></svg>
<!-- ===== annotation ===== -->
<div id="note" class="abs"></div>
<svg style="left:760px;top:470px" width="180" height="140" viewBox="760 470 180 140"><path d="M775.200 502.800C790 492 812 487 832 488.600c28 2.400 52 17 70 40 10 13 15.600 32 15.800 50.400.1 6-.2 11.500-.9 18.200" fill="none" stroke="#f4c430" stroke-width="3.900" stroke-linecap="round"/><path d="M781.200 485.200L774 502.400l17.600 6" fill="none" stroke="#f4c430" stroke-width="4" stroke-linecap="round" stroke-linejoin="round"/></svg>

<!-- text -->
<span class="t" id="t0" style="left:56.0px;top:15.1px;font-size:15px;font-weight:bold;transform:scaleX(1.0116);">data</span>
<span class="t" id="t1" style="left:308.0px;top:66.7px;font-size:17.5px;transform:scaleX(1.0157);"><span class="k2" style="--n:7">バックアップの</span>開始</span>
<span class="t" id="t2" style="left:540.3px;top:66.7px;font-size:17.5px;transform:scaleX(0.9858);">相澤<span class="k2" style="--n:2">ゼミ</span>_資料</span>
<span class="t" id="t3" style="left:700.8px;top:66.7px;font-size:17.5px;transform:scaleX(0.9678);">TA</span>
<span class="t" id="t4" style="left:775.3px;top:66.7px;font-size:17.5px;transform:scaleX(0.9750);">Aizawa_seminar_TA</span>
<span class="t" id="t5" style="left:984.5px;top:66.7px;font-size:17.5px;transform:scaleX(0.9701);">R_Studio_lec</span>
<span class="t" id="t6" style="left:1139.0px;top:66.7px;font-size:17.5px;transform:scaleX(1.0569);">data</span>
<span class="t" id="t7" style="left:1272.5px;top:66.7px;font-size:17.5px;color:#666;transform:scaleX(1.0520);">data<span class="k2" style="--n:1">の</span>検索</span>
<span class="t" id="t8" style="left:55.0px;top:131.6px;font-size:15.5px;transform:scaleX(1.0094);">新規作成</span>
<span class="t" id="t9" style="left:591.5px;top:131.6px;font-size:15.5px;transform:scaleX(1.0123);">並<span class="k" style="--n:1">べ</span>替<span class="k" style="--n:1">え</span></span>
<span class="t" id="t10" style="left:733.0px;top:131.6px;font-size:15.5px;transform:scaleX(0.9834);">表示</span>
<span class="t" id="t11" style="left:1607.5px;top:131.4px;font-size:15.5px;transform:scaleX(0.9834);">詳細</span>
<span class="t" id="t12" style="left:80.2px;top:181.7px;font-size:15.5px;transform:scaleX(0.9461);">添付<span class="k" style="--n:4">ファイル</span></span>
<span class="t" id="t13" style="left:80.2px;top:223.3px;font-size:15.5px;transform:scaleX(1.0205);">保存済<span class="k" style="--n:2">みの</span>写真</span>
<span class="t" id="t14" style="left:70.0px;top:306.6px;font-size:15.5px;transform:scaleX(0.9279);"><span class="k" style="--n:6">デスクトップ</span></span>
<span class="t" id="t15" style="left:70.0px;top:348.3px;font-size:15.5px;transform:scaleX(0.9072);"><span class="k" style="--n:6">ダウンロード</span></span>
<span class="t" id="t16" style="left:70.0px;top:389.9px;font-size:15.5px;transform:scaleX(0.9072);"><span class="k" style="--n:6">ドキュメント</span></span>
<span class="t" id="t17" style="left:70.0px;top:431.6px;font-size:15.5px;transform:scaleX(0.9253);"><span class="k" style="--n:4">ピクチャ</span></span>
<span class="t" id="t18" style="left:70.0px;top:473.2px;font-size:15.5px;transform:scaleX(0.8919);"><span class="k" style="--n:6">ミュージック</span></span>
<span class="t" id="t19" style="left:70.0px;top:514.9px;font-size:15.5px;transform:scaleX(0.9834);">写真</span>
<span class="t" id="t20" style="left:70.0px;top:556.5px;font-size:15.5px;transform:scaleX(0.8934);"><span class="k" style="--n:3">ビデオ</span></span>
<span class="t" id="t21" style="left:70.0px;top:598.2px;font-size:15.5px;transform:scaleX(0.9470);">相澤<span class="k" style="--n:2">ゼミ</span>_資料</span>
<span class="t" id="t22" style="left:70.0px;top:639.8px;font-size:15.5px;transform:scaleX(0.9933);">修士課程</span>
<span class="t" id="t23" style="left:70.0px;top:681.5px;font-size:15.5px;transform:scaleX(0.9004);">RA</span>
<span class="t" id="t24" style="left:70.0px;top:723.1px;font-size:15.5px;transform:scaleX(0.9995);">就職</span>
<span class="t" id="t25" style="left:70.0px;top:764.8px;font-size:15.5px;transform:scaleX(0.9585);">literature_review</span>
<span class="t" id="t26" style="left:70.0px;top:806.4px;font-size:15.5px;transform:scaleX(0.9050);">25-26_ES</span>
<span class="t" id="t27" style="left:19.2px;top:850.8px;font-size:15px;color:#3d4854;transform:scaleX(1.0310);">2 個<span class="k" style="--n:1">の</span>項目</span>
<span class="t" id="t28" style="left:123.0px;top:850.8px;font-size:15px;color:#3d4854;transform:scaleX(1.0171);">1 個<span class="k" style="--n:1">の</span>項目<span class="k" style="--n:1">を</span>選択&nbsp; 414 KB</span>
<span class="t" id="t29" style="left:255.3px;top:180.1px;font-size:13.5px;color:#5c6b7c;transform:scaleX(1.0926);">名前</span>
<span class="t" id="t30" style="left:833.2px;top:180.4px;font-size:13.5px;color:#5c6b7c;transform:scaleX(1.1333);">種類</span>
<span class="t" id="t31" style="left:1009.4px;top:180.1px;font-size:14.5px;color:#5c6b7c;transform:scaleX(1.0458);"><span class="k" style="--n:3">サイズ</span></span>
<span class="t" id="t34" style="left:833.2px;top:221.1px;font-size:15.5px;color:#6e6e6e;transform:scaleX(0.9541);">Microsoft Excel <span class="k" style="--n:3">ワーク</span>...</span>
<span class="t" id="t35" style="left:833.2px;top:258.7px;font-size:15.5px;transform:scaleX(0.9452);">Microsoft Excel CSV ...</span>
<span class="t" id="t36" style="left:1048.2px;top:221.1px;font-size:15.5px;color:#6e6e6e;transform:scaleX(0.9313);">9,470 KB</span>
<span class="t" id="t37" style="left:1060.0px;top:258.7px;font-size:15.5px;transform:scaleX(0.9359);">415 KB</span>
<span class="t" id="t38" style="left:348.0px;top:207.8px;font-size:15px;color:#303030;transform:scaleX(0.9594);">切<span class="k" style="--n:1">り</span>取<span class="k" style="--n:1">り</span></span>
<span class="t" id="t39" style="left:444.0px;top:207.8px;font-size:15px;color:#303030;transform:scaleX(0.8988);"><span class="k" style="--n:3">コピー</span></span>
<span class="t" id="t40" style="left:508.3px;top:207.8px;font-size:15px;color:#303030;transform:scaleX(1.0244);">名前<span class="k" style="--n:1">の</span>変更</span>
<span class="t" id="t41" style="left:614.5px;top:207.8px;font-size:15px;color:#303030;transform:scaleX(0.9762);">共有</span>
<span class="t" id="t42" style="left:699.5px;top:207.8px;font-size:15px;color:#303030;transform:scaleX(1.0028);">削除</span>
<span class="t" id="t43" style="left:386.8px;top:253.5px;font-size:17.5px;transform:scaleX(0.9120);">開<span class="k2" style="--n:1">く</span></span>
<span class="t" id="t44" style="left:386.8px;top:295.1px;font-size:17.5px;transform:scaleX(0.9749);"><span class="k2" style="--n:7">プログラムから</span>開<span class="k2" style="--n:1">く</span></span>
<span class="t" id="t45" style="left:386.8px;top:336.8px;font-size:17.5px;transform:scaleX(1.0235);">My Phone <span class="k2" style="--n:1">に</span>送信</span>
<span class="t" id="t46" style="left:386.8px;top:378.4px;font-size:17.5px;transform:scaleX(1.0248);">共有先</span>
<span class="t" id="t47" style="left:386.8px;top:420.1px;font-size:17.5px;transform:scaleX(1.0244);"><span class="k2" style="--n:1">お</span>気<span class="k2" style="--n:1">に</span>入<span class="k2" style="--n:2">りに</span>追加</span>
<span class="t" id="t48" style="left:386.8px;top:461.7px;font-size:17.5px;transform:scaleX(0.9822);">圧縮先...</span>
<span class="t" id="t49" style="left:386.8px;top:504.2px;font-size:17.5px;color:#25250c;transform:scaleX(0.9801);"><span class="k2" style="--n:6">パスのコピー</span></span>
<span class="t" id="t50" style="left:386.8px;top:545.0px;font-size:17.5px;transform:scaleX(0.9686);"><span class="k2" style="--n:5">プロパティ</span></span>
<span class="t" id="t51" style="left:386.8px;top:598.5px;font-size:17.5px;transform:scaleX(1.0326);">Ask Copilot</span>
<span class="t" id="t52" style="left:386.8px;top:640.1px;font-size:17.5px;transform:scaleX(1.0092);">OneDrive</span>
<span class="t" id="t53" style="left:386.8px;top:682.0px;font-size:17.5px;transform:scaleX(1.0115);"><span class="k2" style="--n:2">メモ</span>帳<span class="k2" style="--n:1">で</span>編集</span>
<span class="t" id="t54" style="left:386.8px;top:735.5px;font-size:17.5px;transform:scaleX(1.0135);"><span class="k2" style="--n:2">その</span>他<span class="k2" style="--n:7">のオプションを</span>確認</span>
<span class="t" id="t55" style="left:653.0px;top:254.5px;font-size:15px;color:#666;transform:scaleX(0.9956);">Enter</span>
<span class="t" id="t56" style="left:653.0px;top:503.9px;font-size:15px;color:#6b6a30;transform:scaleX(1.0550);">Ctrl+Shift+C</span>
<span class="t" id="t57" style="left:653.0px;top:545.9px;font-size:15px;color:#666;transform:scaleX(1.0495);">Alt+Enter</span>
<span class="t" id="t58" style="left:827.8px;top:611.4px;font-size:38px;color:#1c1c1c;font-weight:bold;transform:scaleX(1.0468);">ファイルのパスを取得</span>
</div>
</body>
</html>
